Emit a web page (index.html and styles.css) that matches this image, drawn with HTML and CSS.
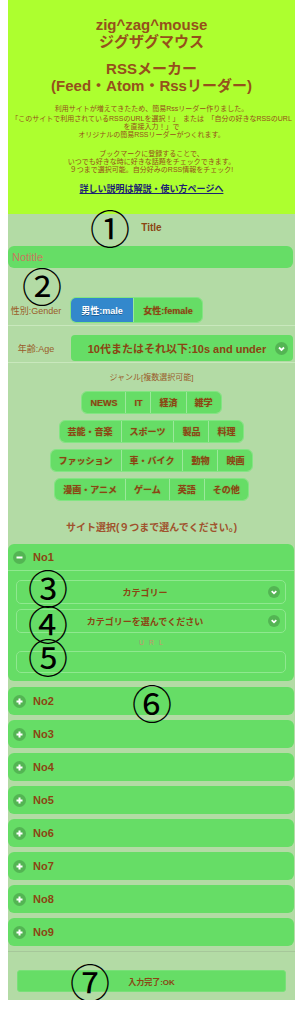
FILE: index.html
```html
<!DOCTYPE html>
<html lang="ja">

<head>
    <meta charset="UTF-8">
    <meta name="viewport" content="width=device-width, initial-scale=1.0">
    <title>RSSメーカー</title>
    <link rel="stylesheet" href="styles.css">
</head>

<body>
    <div class="page">
        <header class="intro">
            <h1>zig^zag^mouse<br>ジグザグマウス</h1>
            <h2>RSSメーカー<br>(Feed・Atom・Rssリーダー)</h2>
            <p class="note">
                <span class="first">利用サイトが増えてきたため、簡易Rssリーダー作りました。</span>
                「このサイトで利用されているRSSのURLを選択！」　または　「自分の好きなRSSのURL<br>
                を直接入力！」で<br>
                オリジナルの簡易RSSリーダーがつくれます。
            </p>
            <p class="note">
                ブックマークに登録することで、<br>
                いつでも好きな時に好きな話題をチェックできます。<br>
                ９つまで選択可能。自分好みのRSS情報をチェック!
            </p>
            <a class="more" href="#">詳しい説明は解説・使い方ページへ</a>
        </header>

        <section class="form">
            <div class="title-label">Title</div>
            <input class="title-input" type="text" value="Notitle">

            <div class="field gender">
                <label>性別:Gender</label>
                <div class="group">
                    <button class="seg active">男性:male</button>
                    <button class="seg">女性:female</button>
                </div>
            </div>

            <div class="field age">
                <label>年齢:Age</label>
                <div class="select big">
                    <span>10代またはそれ以下:10s and under</span>
                    <svg class="ico" width="13" height="13" viewBox="0 0 13 13">
                        <circle cx="6.5" cy="6.5" r="6.5" fill="rgba(0,0,0,0.18)" />
                        <polyline points="4,5.5 6.5,8 9,5.5" fill="none" stroke="#fff" stroke-width="1.8" />
                    </svg>
                </div>
            </div>

            <div class="genre-label">ジャンル[複数選択可能]</div>
            <div class="genres">
                <div class="group">
                    <button class="seg">NEWS</button>
                    <button class="seg">IT</button>
                    <button class="seg">経済</button>
                    <button class="seg">雑学</button>
                </div>
                <div class="group">
                    <button class="seg">芸能・音楽</button>
                    <button class="seg">スポーツ</button>
                    <button class="seg">製品</button>
                    <button class="seg">料理</button>
                </div>
                <div class="group">
                    <button class="seg">ファッション</button>
                    <button class="seg">車・バイク</button>
                    <button class="seg">動物</button>
                    <button class="seg">映画</button>
                </div>
                <div class="group">
                    <button class="seg">漫画・アニメ</button>
                    <button class="seg">ゲーム</button>
                    <button class="seg">英語</button>
                    <button class="seg">その他</button>
                </div>
            </div>

            <div class="site-label">サイト選択(９つまで選んでください。)</div>

            <div class="sets">
                <div class="set open">
                    <div class="set-head">
                        <svg class="ico" width="13" height="13" viewBox="0 0 13 13">
                            <circle cx="6.5" cy="6.5" r="6.5" fill="rgba(0,0,0,0.18)" />
                            <line x1="3.5" y1="6.5" x2="9.5" y2="6.5" stroke="#fff" stroke-width="2" />
                        </svg>
                        <span>No1</span>
                    </div>
                    <div class="set-body">
                        <div class="select small">
                            <span>カテゴリー</span>
                            <svg class="ico" width="12" height="12" viewBox="0 0 13 13">
                                <circle cx="6.5" cy="6.5" r="6.5" fill="rgba(0,0,0,0.18)" />
                                <polyline points="4,5.5 6.5,8 9,5.5" fill="none" stroke="#fff" stroke-width="1.8" />
                            </svg>
                        </div>
                        <div class="select small">
                            <span>カテゴリーを選んでください</span>
                            <svg class="ico" width="12" height="12" viewBox="0 0 13 13">
                                <circle cx="6.5" cy="6.5" r="6.5" fill="rgba(0,0,0,0.18)" />
                                <polyline points="4,5.5 6.5,8 9,5.5" fill="none" stroke="#fff" stroke-width="1.8" />
                            </svg>
                        </div>
                        <div class="url-label">URL</div>
                        <input class="url-input" type="text">
                    </div>
                </div>
                <div class="set"><div class="set-head"><svg class="ico" width="13" height="13" viewBox="0 0 13 13"><circle cx="6.5" cy="6.5" r="6.5" fill="rgba(0,0,0,0.18)" /><path d="M3.5 6.5h6M6.5 3.5v6" stroke="#fff" stroke-width="2" /></svg><span>No2</span></div></div>
                <div class="set"><div class="set-head"><svg class="ico" width="13" height="13" viewBox="0 0 13 13"><circle cx="6.5" cy="6.5" r="6.5" fill="rgba(0,0,0,0.18)" /><path d="M3.5 6.5h6M6.5 3.5v6" stroke="#fff" stroke-width="2" /></svg><span>No3</span></div></div>
                <div class="set"><div class="set-head"><svg class="ico" width="13" height="13" viewBox="0 0 13 13"><circle cx="6.5" cy="6.5" r="6.5" fill="rgba(0,0,0,0.18)" /><path d="M3.5 6.5h6M6.5 3.5v6" stroke="#fff" stroke-width="2" /></svg><span>No4</span></div></div>
                <div class="set"><div class="set-head"><svg class="ico" width="13" height="13" viewBox="0 0 13 13"><circle cx="6.5" cy="6.5" r="6.5" fill="rgba(0,0,0,0.18)" /><path d="M3.5 6.5h6M6.5 3.5v6" stroke="#fff" stroke-width="2" /></svg><span>No5</span></div></div>
                <div class="set"><div class="set-head"><svg class="ico" width="13" height="13" viewBox="0 0 13 13"><circle cx="6.5" cy="6.5" r="6.5" fill="rgba(0,0,0,0.18)" /><path d="M3.5 6.5h6M6.5 3.5v6" stroke="#fff" stroke-width="2" /></svg><span>No6</span></div></div>
                <div class="set"><div class="set-head"><svg class="ico" width="13" height="13" viewBox="0 0 13 13"><circle cx="6.5" cy="6.5" r="6.5" fill="rgba(0,0,0,0.18)" /><path d="M3.5 6.5h6M6.5 3.5v6" stroke="#fff" stroke-width="2" /></svg><span>No7</span></div></div>
                <div class="set"><div class="set-head"><svg class="ico" width="13" height="13" viewBox="0 0 13 13"><circle cx="6.5" cy="6.5" r="6.5" fill="rgba(0,0,0,0.18)" /><path d="M3.5 6.5h6M6.5 3.5v6" stroke="#fff" stroke-width="2" /></svg><span>No8</span></div></div>
                <div class="set"><div class="set-head"><svg class="ico" width="13" height="13" viewBox="0 0 13 13"><circle cx="6.5" cy="6.5" r="6.5" fill="rgba(0,0,0,0.18)" /><path d="M3.5 6.5h6M6.5 3.5v6" stroke="#fff" stroke-width="2" /></svg><span>No9</span></div></div>
            </div>
        </section>

        <footer class="ok-bar">
            <button class="ok-btn">入力完了:OK</button>
        </footer>

        <!-- numbered notes drawn over the screenshot -->
        <span class="mark m1">①</span>
        <span class="mark m2">②</span>
        <span class="mark m3">③</span>
        <span class="mark m4">④</span>
        <span class="mark m5">⑤</span>
        <span class="mark m6">⑥</span>
        <span class="mark m7">⑦</span>
    </div>
</body>

</html>
```

FILE: styles.css
```css
* {
    margin: 0px;
    padding: 0px;
    box-sizing: border-box;
}

body {
    background-color: #fff;
    font-family: "Liberation Sans", "Noto Sans CJK JP", sans-serif;
    color: #8b4513;
}

.page {
    position: relative;
    width: 287px;
    margin-left: 8px;
}

/* header */
.intro {
    background-color: #adff2f;
    text-align: center;
    padding: 16px 0 20px;
    color: #95501c;
}

.intro h1,
.intro h2 {
    font-size: 15px;
    line-height: 17px;
    font-weight: bold;
}

.intro h2 {
    margin-top: 10px;
}

.note {
    font-size: 7px;
    line-height: 8px;
    margin-top: 11px;
    white-space: nowrap;
}

.note .first {
    display: block;
    margin-bottom: 2px;
}

.more {
    display: block;
    margin-top: 10px;
    font-size: 9px;
    line-height: 10px;
    font-weight: bold;
    color: #1c2273;
}

/* form */
.form {
    background-color: #b3dba5;
}

.title-label {
    padding-top: 8px;
    text-align: center;
    font-size: 10px;
    line-height: 12px;
    font-weight: bold;
}

.title-input {
    display: block;
    width: 285px;
    height: 22px;
    margin-top: 12px;
    border: none;
    border-radius: 6px;
    background-color: #66dd66;
    padding-left: 4px;
    font-family: inherit;
    font-size: 11px;
    color: #c9785e;
    outline: none;
}

.field {
    display: flex;
    align-items: center;
    border-bottom: 1px solid #c9e8bd;
}

.field label {
    width: 56px;
    text-align: center;
    font-size: 9px;
    color: #9a5b2a;
    white-space: nowrap;
}

.field.gender {
    margin-top: 29px;
    padding-bottom: 2px;
}

.field.gender .group {
    margin-left: 6px;
}

.field.age {
    padding-top: 9px;
    padding-bottom: 1px;
}

.group {
    display: flex;
    border: 1px solid #82e582;
    border-radius: 6px;
    overflow: hidden;
}

.seg {
    height: 22px;
    padding: 0 8px;
    border: none;
    border-left: 1px solid #9be89b;
    background-color: #66dd66;
    font-family: inherit;
    font-size: 9px;
    font-weight: bold;
    color: #8b4513;
    text-shadow: 0 0 1px rgba(139, 69, 19, 0.5);
    white-space: nowrap;
}

.seg:first-child {
    border-left: none;
}

.gender .seg {
    height: 24px;
    padding: 0;
}

.gender .seg:first-child {
    width: 62px;
}

.gender .seg:last-child {
    width: 69px;
}

.seg.active {
    background-color: #3388cc;
    color: #fff;
    text-shadow: 0 1px 0 #1f5e94;
}

.select {
    position: relative;
    display: flex;
    align-items: center;
    justify-content: center;
    background-color: #66dd66;
    font-weight: bold;
}

.select .ico {
    position: absolute;
    right: 5px;
}

.select.big {
    margin-left: 7px;
    width: 222px;
    height: 26px;
    border-radius: 4px;
    font-size: 11px;
    padding-right: 10px;
}

.select.small {
    height: 24px;
    border: 1px solid #8fe88f;
    border-radius: 5px;
    font-size: 9px;
    padding-right: 12px;
}

.select.small + .select.small {
    margin-top: 5px;
}

.genre-label {
    margin-top: 10px;
    text-align: center;
    font-size: 8px;
    line-height: 10px;
    color: #9a5b2a;
}

.genres {
    display: flex;
    flex-direction: column;
    align-items: center;
    gap: 6px;
    margin-top: 8px;
}

.genres .seg {
    height: 21px;
}

.site-label {
    margin-top: 21px;
    text-align: center;
    font-size: 10px;
    line-height: 12px;
    font-weight: bold;
    color: #a0522d;
}

/* collapsible list */
.sets {
    margin-top: 10px;
    padding-bottom: 5px;
    width: 286px;
    display: flex;
    flex-direction: column;
    gap: 5px;
}

.set {
    background-color: #66dd66;
    border-radius: 6px;
}

.set.open {
    margin-bottom: 1px;
}

.set-head {
    height: 28px;
    display: flex;
    align-items: center;
    gap: 7px;
    padding-left: 5px;
    font-size: 11px;
    font-weight: bold;
}

.set.open .set-head {
    height: 27px;
    border-bottom: 1px solid #8fe88f;
}

.set-body {
    padding: 9px 8px 8px;
}

.url-label {
    margin-top: 5px;
    text-align: center;
    font-size: 7px;
    line-height: 10px;
    letter-spacing: 5px;
    padding-left: 5px;
    color: #c09070;
}

.url-input {
    display: block;
    width: 100%;
    height: 22px;
    margin-top: 3px;
    border: 1px solid #8fe88f;
    border-radius: 5px;
    background-color: #66dd66;
    outline: none;
}

/* footer */
.ok-bar {
    background-color: #b3dba5;
    border-top: 1px solid #a6c79a;
    padding: 18px 9px 8px;
}

.ok-btn {
    display: block;
    width: 100%;
    height: 22px;
    border: 1px solid #78e078;
    border-radius: 3px;
    background-color: #66dd66;
    font-family: inherit;
    font-size: 8px;
    font-weight: bold;
    color: #8b4513;
}

/* annotation marks */
.mark {
    position: absolute;
    width: 40px;
    height: 40px;
    line-height: 40px;
    text-align: center;
    font-family: "Noto Sans CJK JP", sans-serif;
    font-size: 40px;
    color: #000;
}

.m1 { left: 82px; top: 207px; }
.m2 { left: 14px; top: 265px; }
.m3 { left: 20px; top: 567px; }
.m4 { left: 20px; top: 603px; }
.m5 { left: 20px; top: 636px; }
.m6 { left: 124px; top: 682px; }
.m7 { left: 62px; top: 961px; }
```
